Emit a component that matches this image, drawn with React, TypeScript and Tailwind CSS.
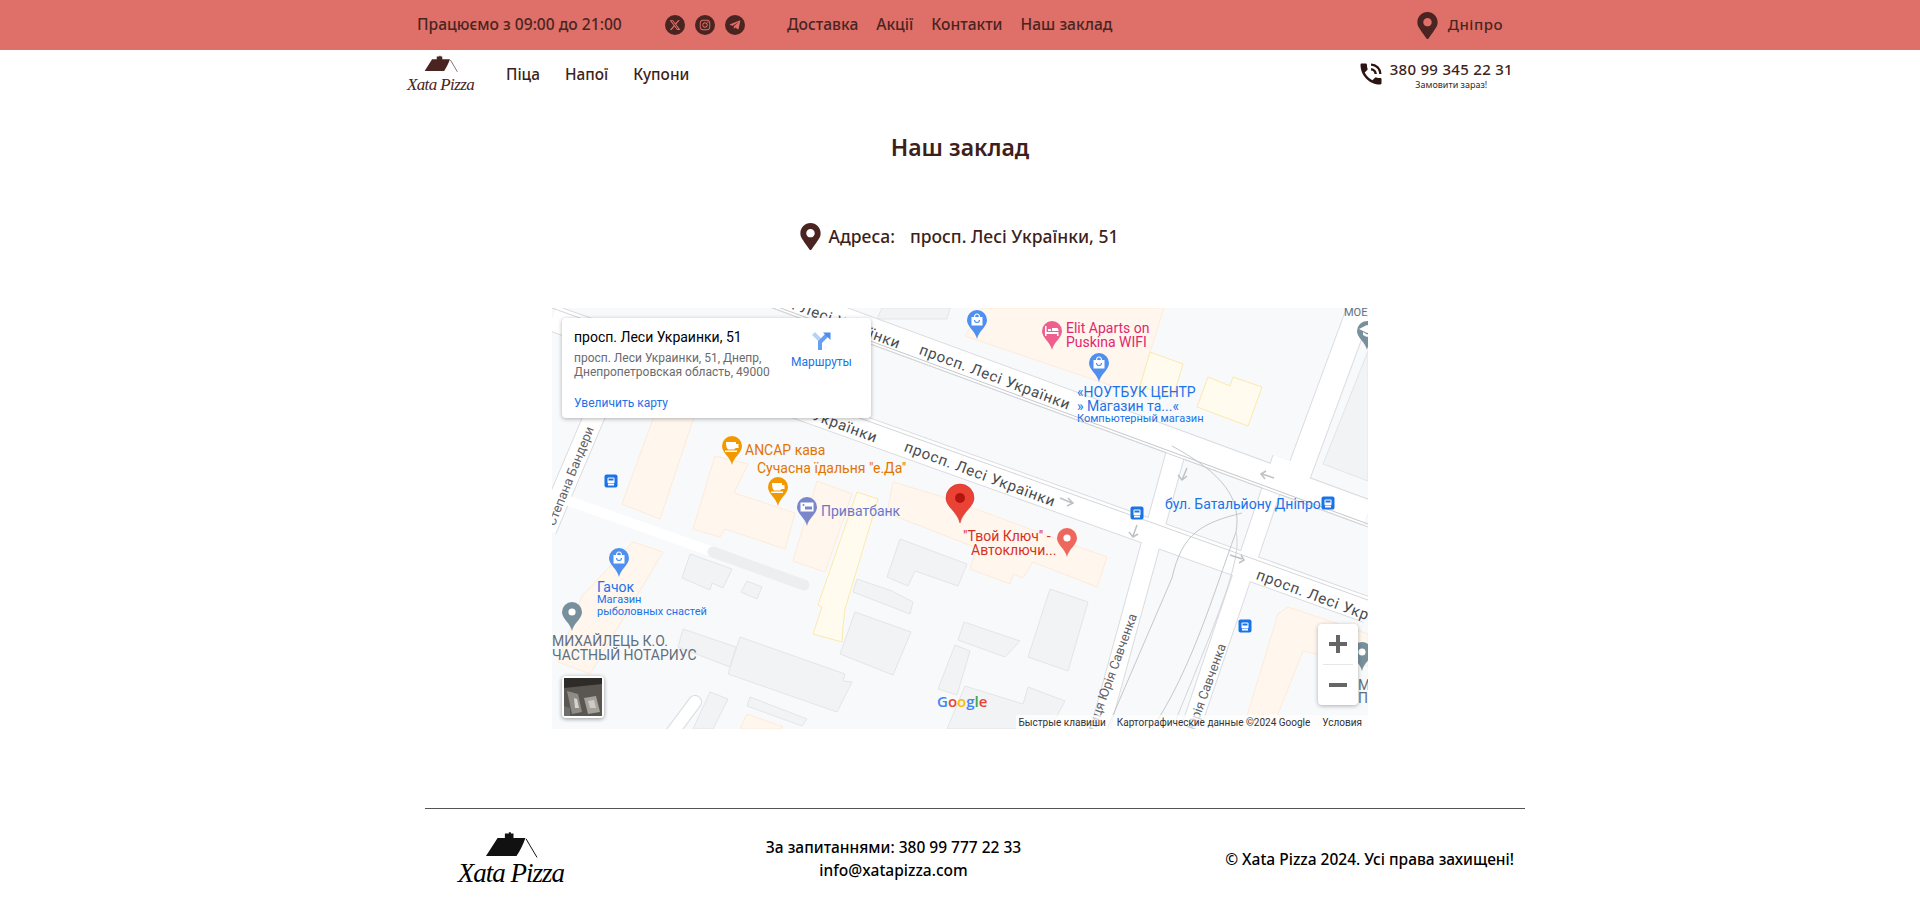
import React from 'react';
import { FaMapMarkerAlt, FaInstagram, FaTelegramPlane } from 'react-icons/fa';
import { FaXTwitter } from 'react-icons/fa6';
import { MdPhoneInTalk } from 'react-icons/md';

const orange = [
  '70,196 108,211 145,100 105,100',
  '163,148 196,156 182,185 243,205 233,241 173,221 168,229 141,221',
  '265,173 300,186 273,264 241,253',
  '341,174 391,189 505,231 555,249 545,279 481,254 471,270 461,266 458,276 418,261 425,240 335,205',
  '413,28 590,88 598,44 612,0 431,0',
  '736,299 816,326 816,358 751,343 720,421 691,421 726,306',
  '816,139 800,164 816,171',
  '81,234 111,244 38,366 6,354 30,288',
  '195,406 231,419 228,421 188,421',
];
const yellow = [
  '305,184 326,191 293,301 291,319 290,334 261,326 270,299 266,297',
  '598,44 631,56 621,89 588,78',
  '656,69 678,78 681,69 710,79 696,118 645,99',
];
const gray = [
  '330,0 398,0 395,11 325,11',
  '138,246 180,261 171,280 160,275 158,282 130,270',
  '195,273 210,279 205,291 189,284',
  '188,329 293,366 291,373 300,374 285,404 176,366',
  '131,321 184,339 178,359 126,339',
  '303,304 359,324 341,367 288,346',
  '305,271 340,283 361,294 358,306 301,284',
  '348,231 415,256 406,278 363,263 356,278 335,269',
  '198,389 255,411 250,418 195,398',
  '158,384 176,391 161,421 141,421',
  '403,337 418,343 405,387 386,381',
  '412,314 468,333 453,349 406,332',
  '498,281 536,294 516,363 476,349',
  '413,378 471,396 476,379 513,393 498,421 395,421',
  '816,43 783,126 771,156 816,173',
];

const pins = [
  { x: 180, y: 138, color: '#f29900', glyph: 'cup' },
  { x: 226, y: 179, color: '#f29900', glyph: 'cup' },
  { x: 255, y: 199, color: '#7986cb', glyph: 'bank' },
  { x: 425, y: 12, color: '#4e8ff0', glyph: 'bag' },
  { x: 500, y: 23, color: '#ee5f8e', glyph: 'bed' },
  { x: 547, y: 55, color: '#4e8ff0', glyph: 'bag' },
  { x: 67, y: 250, color: '#4e8ff0', glyph: 'bag' },
  { x: 20, y: 304, color: '#78909c', glyph: 'dot' },
  { x: 815, y: 23, color: '#78909c', glyph: 'cap' },
  { x: 810, y: 344, color: '#78909c', glyph: 'dot' },
  { x: 515, y: 230, color: '#ee675c', glyph: 'dot' },
];

const labels = [
  { x: 193, y: 147, text: 'ANCAP кава', color: '#e37400', size: 14 },
  { x: 205, y: 165, text: 'Сучасна їдальня "е.Да"', color: '#e37400', size: 14 },
  { x: 269, y: 208, text: 'Приватбанк', color: '#6a78c9', size: 14 },
  { x: 514, y: 25, text: 'Elit Aparts on', color: '#e3266d', size: 14 },
  { x: 514, y: 39, text: 'Puskina WIFI', color: '#e3266d', size: 14 },
  { x: 525, y: 89, text: '«НОУТБУК ЦЕНТР', color: '#1a73e8', size: 14 },
  { x: 525, y: 103, text: '» Магазин та...«', color: '#1a73e8', size: 14 },
  { x: 525, y: 114, text: 'Компьютерный магазин', color: '#1a73e8', size: 11 },
  { x: 613, y: 201, text: 'бул. Батальйону Дніпро', color: '#1a73e8', size: 14 },
  { x: 411, y: 233, text: '"Твой Ключ" -', color: '#d93025', size: 14 },
  { x: 419, y: 247, text: 'Автоключи...', color: '#d93025', size: 14 },
  { x: 45, y: 284, text: 'Гачок', color: '#1a73e8', size: 14 },
  { x: 45, y: 295, text: 'Магазин', color: '#1a73e8', size: 11 },
  { x: 45, y: 307, text: 'рыболовных снастей', color: '#1a73e8', size: 11 },
  { x: 0, y: 338, text: 'МИХАЙЛЕЦЬ К.О.', color: '#5f6f7e', size: 14 },
  { x: 0, y: 352, text: 'ЧАСТНЫЙ НОТАРИУС', color: '#5f6f7e', size: 14 },
  { x: 792, y: 8, text: 'МОЕ', color: '#5f6f7e', size: 11 },
  { x: 806, y: 382, text: 'М', color: '#5f6f7e', size: 14 },
  { x: 806, y: 395, text: 'П', color: '#5f6f7e', size: 14 },
];

const roadLabels = [
  { x: 198, y: -20, text: 'просп. Лесі Українки' },
  { x: 368, y: 41, text: 'просп. Лесі Українки' },
  { x: 175, y: 74, text: 'просп. Лесі Українки' },
  { x: 353, y: 138, text: 'просп. Лесі Українки' },
  { x: 705, y: 266, text: 'просп. Лесі Українки' },
];

const transit = [
  [59, 173],
  [776, 195],
  [585, 205],
  [693, 318],
];

function Pin({ x, y, color, glyph }: { x: number; y: number; color: string; glyph: string }) {
  return (
    <g transform={`translate(${x} ${y})`}>
      <path d="M0 19C-1.500 11-10 7-10 0A10 10 0 1 1 10 0C10 7 1.500 11 0 19Z" fill={color} />
      {glyph === 'dot' && <circle cx="0" cy="0" r="3.6" fill="#fff" />}
      {glyph === 'cup' && <path d="M-6-4H4V-2H6.500V2H3.500C3 3 2 3.500 1 3.500H-3C-5 3.500-6 1-6-4ZM-7 4.500H5V6H-7Z" fill="#fff" />}
      {glyph === 'bag' && (
        <g>
          <path d="M-5.500-3H5.500V5.500H-5.500Z" fill="#fff" />
          <path d="M-2.500-3A2.500 3 0 0 1 2.500-3" stroke="#fff" strokeWidth="1.2" fill="none" />
          <path d="M-2.500 0A2.500 2.500 0 0 0 2.500 0" stroke={color} strokeWidth="1.2" fill="none" />
        </g>
      )}
      {glyph === 'bed' && <path d="M-7-5H-5.500V1H6.500V5H5V3H-5.500V5H-7ZM-4-2H-1V0H-4ZM0-3H5C6-3 6.500-2 6.500 0H0Z" fill="#fff" />}
      {glyph === 'bank' && (
        <g>
          <rect x="-6.500" y="-4.500" width="13" height="9" fill="#fff" />
          <circle cx="-3.500" cy="-2" r="1" fill={color} />
          <rect x="-2" y="-0.500" width="7" height="3" fill={color} />
        </g>
      )}
      {glyph === 'cap' && <path d="M-8-2 0-6 8-2 0 2ZM-4 1 0 3.500 4 1V4L0 6-4 4Z" fill="#fff" />}
    </g>
  );
}

function MapCanvas() {
  return (
    <svg width="816" height="421" viewBox="0 0 816 421" className="block">
      <rect width="816" height="421" fill="#f8f9fb" />

      {orange.map((p) => (
        <polygon key={p} points={p} fill="#fff6ee" stroke="#fdebd8" />
      ))}
      {yellow.map((p) => (
        <polygon key={p} points={p} fill="#fffbef" stroke="#fde9ad" />
      ))}
      {gray.map((p) => (
        <polygon key={p} points={p} fill="#f1f3f4" stroke="#e3e5e8" />
      ))}

      {/* streets: grey casing under white fill */}
      <g fill="none" strokeLinecap="butt">
        <g stroke="#dadce0">
          <path d="M0-95 816 205" strokeWidth="27" />
          <path d="M0 10 816 302" strokeWidth="27" />
          <path d="M50 90-6 222" strokeWidth="22" />
          <path d="M625 140 547 425" strokeWidth="20" />
          <path d="M730 150 637 425" strokeWidth="20" />
          <path d="M806 5 745 170" strokeWidth="26" />
        </g>
        <g stroke="#fff">
          <path d="M0-95 816 205" strokeWidth="25" />
          <path d="M0 10 816 302" strokeWidth="25" />
          <path d="M50 90-6 222" strokeWidth="20" />
          <path d="M625 140 547 425" strokeWidth="18" />
          <path d="M730 150 637 425" strokeWidth="18" />
          <path d="M806 5 745 170" strokeWidth="24" />
        </g>
        <path d="M0 187 161 244" stroke="#fff" strokeWidth="10" />
        <path d="M161 244 252 277" stroke="#eceef0" strokeWidth="11" strokeLinecap="round" />
        <path d="M143 394 120 425" stroke="#dadce0" strokeWidth="14" strokeLinecap="round" />
        <path d="M143 394 120 425" stroke="#fff" strokeWidth="12" strokeLinecap="round" />
        {/* tram tracks */}
        <path d="M0-84 816 216" stroke="#c4c7cc" strokeWidth="1" />
        <path d="M0-81 816 219" stroke="#d3d5d9" strokeWidth="1" />
        <path d="M0 0 816 292" stroke="#d3d5d9" strokeWidth="1" />
        <path d="M620 138C670 165 690 190 684 224 660 290 640 360 600 421" stroke="#c4c7cc" strokeWidth="1" />
        <path d="M690 205C650 215 630 225 620 270L555 421" stroke="#c4c7cc" strokeWidth="1" />
        <path d="M684 224C690 250 670 300 620 421" stroke="#d3d5d9" strokeWidth="1" />
      </g>

      {/* one way arrows */}
      <g fill="none" stroke="#bdc1c6" strokeWidth="1.5">
        <path d="M508 190 520 195M516 190 521 195 515 198" />
        <path d="M635 160 630 172M626 167 630 172 635 168" />
        <path d="M722 170 710 166M714 163 709 166 713 171" />
        <path d="M690 251 678 247M689 247 692 252 687 255" />
        <path d="M585 217 581 228M577 224 581 229 586 226" />
      </g>

      {/* road names */}
      <g fontFamily="Roboto, sans-serif" fontSize="15" fill="#474b50" letterSpacing="0.7">
        {roadLabels.map((l) => (
          <text key={l.x} transform={`translate(${l.x} ${l.y}) rotate(20.5)`} dominantBaseline="central">
            {l.text}
          </text>
        ))}
      </g>
      <g fontFamily="Roboto, sans-serif" fontSize="13" fill="#5f6368" textAnchor="end">
        <text transform="translate(38 119) rotate(-68)" dominantBaseline="central">
          Степана Бандери
        </text>
        <text transform="translate(581 306) rotate(-70)" dominantBaseline="central">
          вулиця Юрія Савченка
        </text>
        <text transform="translate(670 336) rotate(-70)" dominantBaseline="central">
          вулиця Юрія Савченка
        </text>
      </g>

      {pins.map((p) => (
        <Pin key={`${p.x}-${p.y}`} {...p} />
      ))}

      {transit.map(([x, y]) => (
        <g key={x} transform={`translate(${x} ${y})`}>
          <rect x="-6.500" y="-6.500" width="13" height="13" rx="2" fill="#1a73e8" />
          <rect x="-3.500" y="-3.500" width="7" height="6" rx="1" fill="#fff" />
          <rect x="-2.500" y="-2.500" width="5" height="2" fill="#1a73e8" />
          <rect x="-3" y="3" width="6" height="1.500" fill="#fff" />
        </g>
      ))}

      <g fontFamily="Roboto, sans-serif">
        {labels.map((l) => (
          <text key={l.text} x={l.x} y={l.y} fontSize={l.size} fill={l.color}>
            {l.text}
          </text>
        ))}
      </g>

      {/* main marker */}
      <path d="M408 215C405 203 394 199 394 190A14 14 0 1 1 422 190C422 199 411 203 408 215Z" fill="#ea4335" stroke="#c5221f" strokeWidth="0.5" />
      <circle cx="408" cy="190" r="5" fill="#b3140f" />

      <text x="385" y="399" fontFamily="'Open Sans', Roboto, sans-serif" fontSize="15" fontWeight="600">
        <tspan fill="#4285f4">G</tspan>
        <tspan fill="#ea4335">o</tspan>
        <tspan fill="#fbbc04">o</tspan>
        <tspan fill="#4285f4">g</tspan>
        <tspan fill="#34a853">l</tspan>
        <tspan fill="#ea4335">e</tspan>
      </text>
    </svg>
  );
}

function DirectionsIcon() {
  return (
    <svg width="19" height="18" viewBox="0 0 19 18">
      <path d="M1.500 1.500 8 8" stroke="#b5d3f5" strokeWidth="4" fill="none" />
      <path d="M8 18V10L15 3" stroke="#669df6" strokeWidth="4" fill="none" />
      <path d="M11 0.500H18.500V8Z" fill="#4a8df0" />
    </svg>
  );
}

function MapEmbed() {
  return (
    <div className="relative w-[816px] h-[421px] overflow-hidden font-['Roboto',sans-serif]">
      <MapCanvas />

      <div className="absolute left-[10px] top-[10px] w-[309px] h-[100px] bg-white rounded-sm shadow-[0_1px_4px_rgba(0,0,0,0.3)] pl-3 pr-[14px] pt-[10px] flex">
        <div className="w-[212px] shrink-0">
          <div className="text-[14px] leading-[18px] font-normal text-black">просп. Леси Украинки, 51</div>
          <div className="text-[12px] leading-[14px] text-[#6b6b6b] mt-[5px] whitespace-nowrap">
            просп. Леси Украинки, 51, Днепр,
            <br />
            Днепропетровская область, 49000
          </div>
          <div className="text-[12px] leading-[14px] text-[#1a73e8] mt-[17px]">Увеличить карту</div>
        </div>
        <div className="flex-1 flex flex-col items-center pt-[4px]">
          <DirectionsIcon />
          <div className="text-[12px] leading-[14px] text-[#1a73e8] mt-[5px]">Маршруты</div>
        </div>
      </div>

      <div className="absolute left-[10px] top-[368px] w-[42px] h-[42px] bg-white rounded-sm p-[2px] shadow-[0_1px_4px_rgba(0,0,0,0.4)]">
        <svg width="38" height="38" viewBox="0 0 38 38" className="block">
          <rect width="38" height="38" fill="#5a5752" />
          <path d="M0 0H38V6L0 10Z" fill="#2e2b29" />
          <path d="M3 13 14 16 18 34 8 36Z" fill="#8f8b86" />
          <path d="M20 20 32 18 36 34 24 36Z" fill="#a5a19b" />
          <path d="M10 20 13 21 15 30 11 30Z" fill="#d6d3cd" />
          <path d="M24 23 30 22 32 30 26 30Z" fill="#cfcbc4" />
          <path d="M0 28 6 30 6 38 0 38Z" fill="#6c6f6a" />
        </svg>
      </div>

      <div className="absolute left-[766px] top-[316px] w-[40px] h-[81px] bg-white rounded-sm shadow-[0_1px_4px_rgba(0,0,0,0.3)] flex flex-col items-center">
        <div className="h-[40px] w-full flex items-center justify-center">
          <div className="relative w-[18px] h-[18px]">
            <div className="absolute left-[7px] top-0 w-[4px] h-[18px] bg-[#666]" />
            <div className="absolute left-0 top-[7px] w-[18px] h-[4px] bg-[#666]" />
          </div>
        </div>
        <div className="w-[30px] h-px bg-[#e6e6e6]" />
        <div className="h-[40px] w-full flex items-center justify-center">
          <div className="w-[18px] h-[4px] bg-[#666]" />
        </div>
      </div>

      <div className="absolute right-0 bottom-0 h-[14px] flex items-center text-[10px] text-[#333] bg-white/70 whitespace-nowrap">
        <span className="pl-[3px] pr-[11px]">Быстрые клавиши</span>
        <span className="pr-[12px]">Картографические данные ©2024 Google</span>
        <span className="pr-[6px]">Условия</span>
      </div>
    </div>
  );
}

function RoofLogo({ color, className }: { color: string; className: string }) {
  return (
    <svg viewBox="100 25 160 80" className={className}>
      <path d="M103 100 138 45H160V32H172V28H178V32H186V45H222C215 65 205 85 195 100Z" fill={color} />
      <path d="M224 48 257 104" stroke={color} strokeWidth="3" fill="none" />
    </svg>
  );
}

function Social({ children }: { children: React.ReactNode }) {
  return (
    <div className="w-5 h-5 rounded-full bg-[#4a2421] flex items-center justify-center text-[#df7069] text-[12px]">
      {children}
    </div>
  );
}

export default function App() {
  return (
    <div className="min-h-screen bg-white font-['Noto_Sans',sans-serif] text-[#3d1f1b]">
      {/* TOP BAR */}
      <div className="h-[50px] bg-[#df7069] text-[#4a2421]">
        <div className="w-[1110px] mx-auto h-full px-3 flex items-center">
          <span className="text-[15.6px] font-medium w-[248px] whitespace-nowrap">Працюємо з 09:00 до 21:00</span>
          <div className="flex gap-[10px] mr-[42px]">
            <Social><FaXTwitter /></Social>
            <Social><FaInstagram /></Social>
            <Social><FaTelegramPlane /></Social>
          </div>
          <nav className="flex gap-[18px] text-[15.6px] font-medium whitespace-nowrap">
            <span>Доставка</span>
            <span>Акції</span>
            <span>Контакти</span>
            <span>Наш заклад</span>
          </nav>
          <div className="ml-auto flex items-center gap-[7px]">
            <FaMapMarkerAlt className="text-[#4a2421] text-[27px]" />
            <span className="text-[15px] font-medium tracking-[0.5px] pb-[2px]">Дніпро</span>
          </div>
        </div>
      </div>

      {/* NAV */}
      <div className="w-[1110px] mx-auto h-[50px] flex items-center px-[2px]">
        <div className="w-[67px] flex flex-col items-center">
          <RoofLogo color="#4a2421" className="w-[34px] h-[17px]" />
          <span className="font-['Liberation_Serif',serif] italic text-[17px] leading-[20px] mt-[3px] tracking-[-0.6px] text-[#4a2421] whitespace-nowrap">Xata Pizza</span>
        </div>
        <nav className="flex gap-[25px] ml-[32px] text-[15.4px] font-medium whitespace-nowrap">
          <span>Піца</span>
          <span>Напої</span>
          <span>Купони</span>
        </nav>
        <div className="ml-auto flex items-start">
          <MdPhoneInTalk className="text-[28px] text-[#2b1512] mt-[1px] mr-[5px]" />
          <div className="flex flex-col items-center">
            <span className="text-[15px] leading-[20px] font-medium tracking-[0.3px] whitespace-nowrap">380 99 345 22 31</span>
            <span className="text-[9px] leading-[12px]">Замовити зараз!</span>
          </div>
        </div>
      </div>

      {/* MAIN */}
      <main className="flex flex-col items-center">
        <h1 className="text-[23px] leading-[32px] font-semibold mt-[31px]">Наш заклад</h1>
        <div className="flex items-center mt-[60px] pr-[5px] text-[17.500px] font-medium">
          <FaMapMarkerAlt className="text-[27px] text-[#4a2421] mr-[5px]" />
          <span>Адреса:</span>
          <span className="ml-[15px]">просп. Лесі Українки, 51</span>
        </div>
        <div className="mt-[58px]">
          <MapEmbed />
        </div>
      </main>

      {/* FOOTER */}
      <footer className="w-[1100px] ml-[425px] mt-[79px] border-t border-[#555] h-[102px] flex items-center text-black text-[15.500px] font-medium whitespace-nowrap">
        <div className="w-[172px] flex flex-col items-center">
          <RoofLogo color="#111" className="w-[53px] h-[27px]" />
          <span className="font-['Liberation_Serif',serif] italic text-[27px] leading-[30px] tracking-[-1px]">Xata Pizza</span>
        </div>
        <div className="w-[255px] ml-[169px] flex flex-col items-center leading-[23px] -mt-[2px]">
          <span>За запитаннями: 380 99 777 22 33</span>
          <span>info@xatapizza.com</span>
        </div>
        <div className="ml-auto pr-[11px]">© Xata Pizza 2024. Усі права захищені!</div>
      </footer>
    </div>
  );
}
